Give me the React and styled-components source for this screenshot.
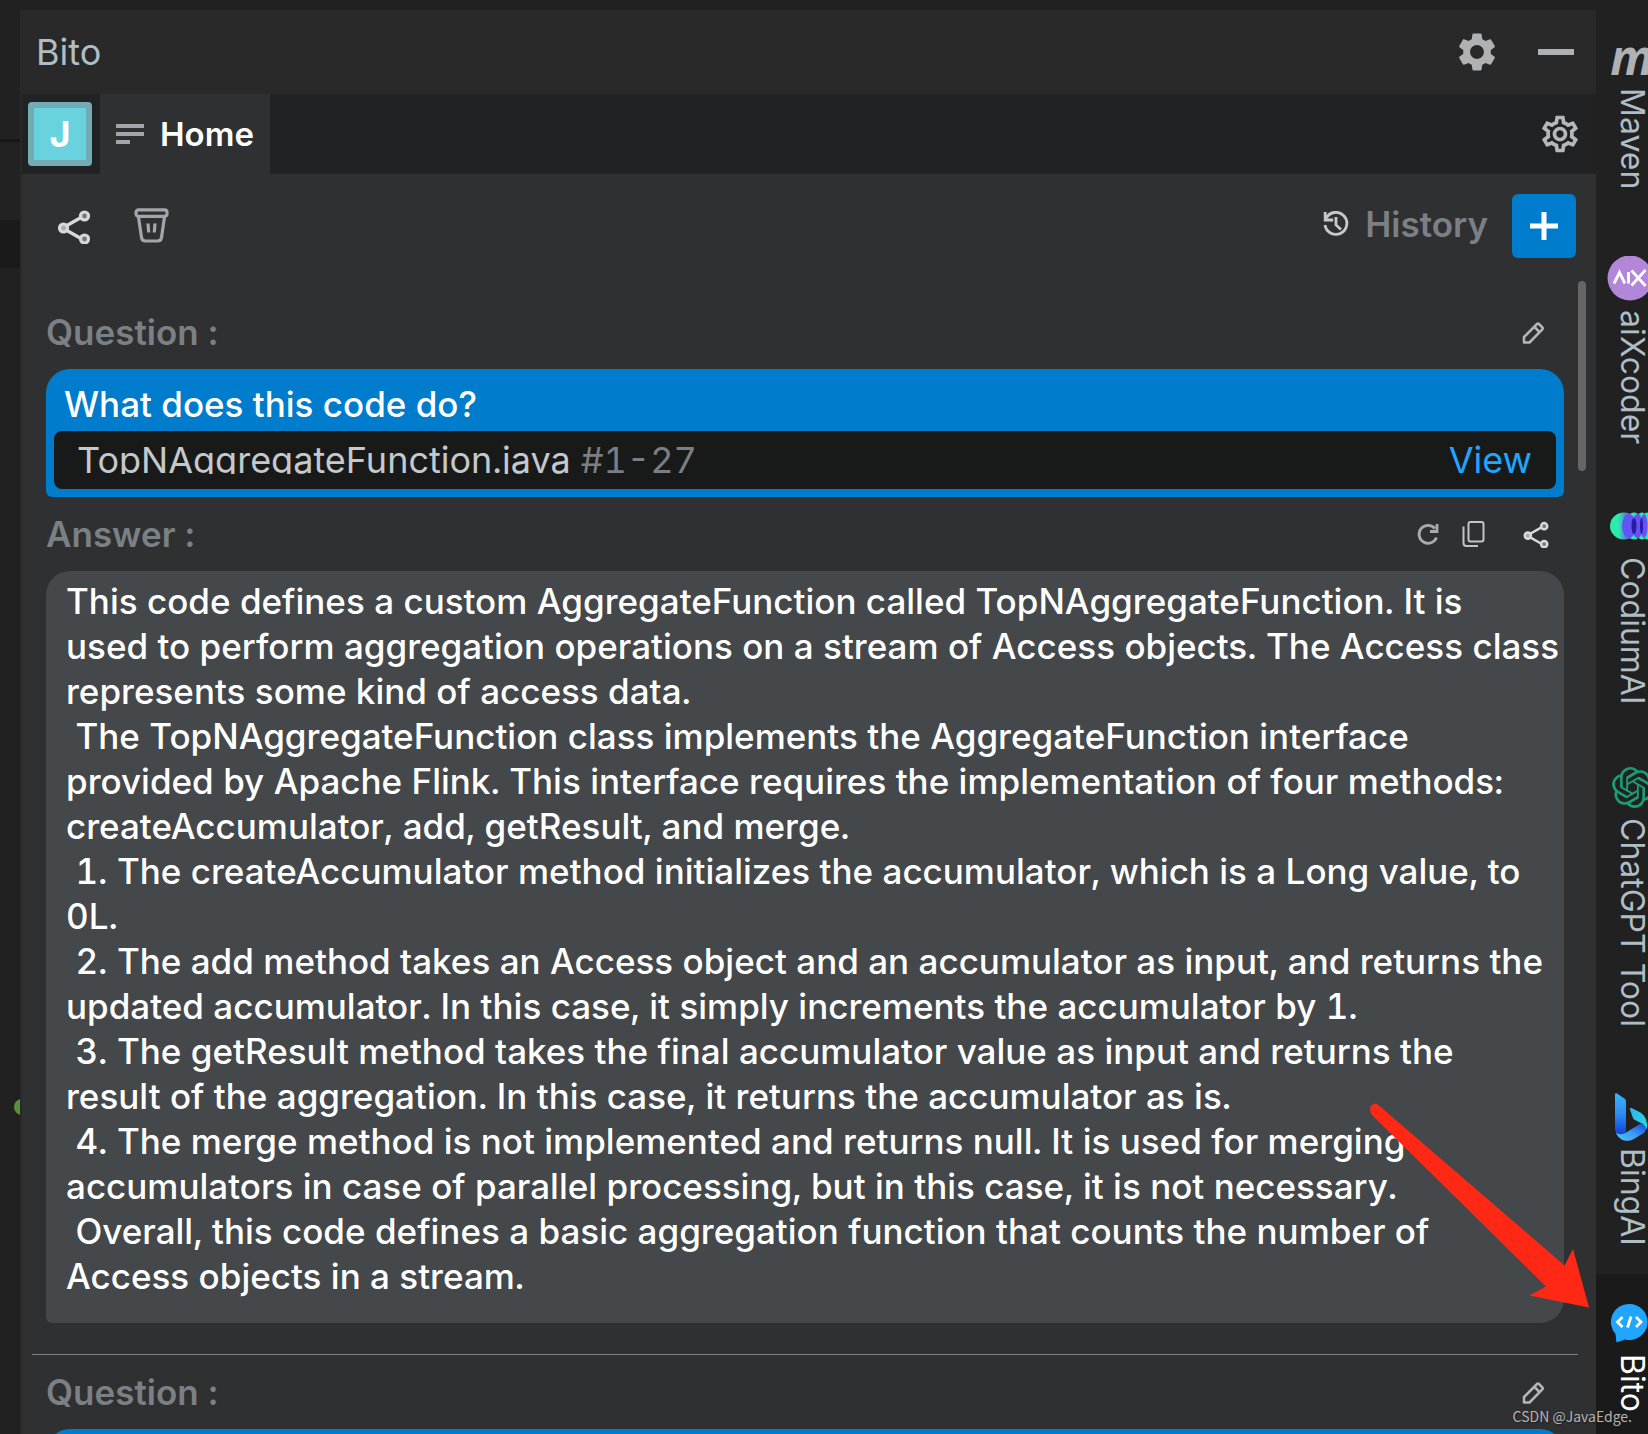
import React from "react";
import styled, { createGlobalStyle } from "styled-components";
import { MdSettings, MdOutlineSettings } from "react-icons/md";
import { SiOpenai } from "react-icons/si";

const GlobalStyle = createGlobalStyle`
  *, *::before, *::after { box-sizing: border-box; }
  body {
    margin: 0;
    background: #212121;
    font-family: Inter, "Liberation Sans", sans-serif;
  }
  button { font: inherit; color: inherit; background: none; border: 0; padding: 0; cursor: pointer; }
`;

const Window = styled.div`
  position: relative;
  display: flex;
  height: 100vh;
  overflow: hidden;
`;

/* Editor strip on the far left */
const Gutter = styled.div`
  flex: 0 0 20px;
  display: flex;
  flex-direction: column;
  overflow: hidden;
`;
const GutterBand = styled.div`
  flex: 0 0 ${(p) => p.$height}px;
  background: ${(p) => p.$color};
`;
const GutterMarks = styled.div`
  flex: 1;
  padding: 831px 0 0 14px;
`;
const ChangeDot = styled.div`
  width: 16px;
  height: 16px;
  border-radius: 50%;
  background: #57913f;
`;

/* Tool window */
const Panel = styled.main`
  flex: 1;
  min-width: 0;
  margin-top: 10px;
  display: flex;
  flex-direction: column;
  background: #2f3032;
  border-left: 2px solid #292929;
`;
const TitleBar = styled.header`
  flex: 0 0 84px;
  display: flex;
  align-items: center;
  justify-content: space-between;
  padding: 0 22px 0 14px;
  background: #292929;
  color: #afb1b3;
`;
const Title = styled.h1`
  margin: 0;
  font-size: 36px;
  font-weight: 400;
  line-height: 40px;
  color: #afbdc4;
`;
const TitleActions = styled.div`
  display: flex;
  align-items: center;
  gap: 38px;
`;
const IconButton = styled.button`
  display: flex;
  align-items: center;
  justify-content: center;
  color: ${(p) => p.$color || "#afb1b3"};
`;
const MinimizeBar = styled.span`
  width: 36px;
  height: 6px;
  background: #afb1b3;
`;

const TabBar = styled.nav`
  flex: 0 0 80px;
  display: flex;
  align-items: stretch;
  padding: 0 14px 0 6px;
  background: #212224;
`;
const Avatar = styled.button`
  align-self: center;
  width: 64px;
  height: 64px;
  margin-right: 8px;
  border: 6px solid #72abb3;
  border-radius: 4px;
  background: #68d3df;
  color: #fff;
  font-size: 36px;
  font-weight: 700;
  line-height: 40px;
`;
const Tab = styled.button`
  display: flex;
  align-items: center;
  gap: 16px;
  padding: 0 16px;
  background: #2f3032;
  color: #fff;
  font-size: 33px;
  font-weight: 600;
`;
const TabSpacer = styled.div`
  flex: 1;
`;

const Toolbar = styled.div`
  flex: 0 0 104px;
  display: flex;
  align-items: flex-start;
  justify-content: space-between;
  padding: 20px 20px 0 34px;
`;
const ToolGroup = styled.div`
  display: flex;
  align-items: center;
  height: 64px;
  gap: ${(p) => p.$gap}px;
`;
const HistoryButton = styled.button`
  display: flex;
  align-items: center;
  gap: 16px;
  padding-bottom: 4px;
  color: #7b8084;
  font-size: 35px;
  font-weight: 600;
`;
const NewChat = styled.button`
  display: flex;
  align-items: center;
  justify-content: center;
  width: 64px;
  height: 64px;
  border-radius: 6px;
  background: #007ccc;
`;

const Body = styled.div`
  flex: 1;
  min-height: 0;
  display: flex;
  overflow: hidden;
`;
const Thread = styled.div`
  flex: 1;
  min-width: 0;
  padding: 30px 0 0 10px;
`;
const Entry = styled.section`
  padding: 0 14px;
`;
const LabelRow = styled.div`
  display: flex;
  align-items: center;
  justify-content: space-between;
  height: 48px;
  margin: ${(p) => (p.$spaced ? "13px" : "0")} 0 13px;
  padding-right: 14px;
`;
const RowLabel = styled.h2`
  margin: 0;
  color: #7b8084;
  font-size: 35px;
  font-weight: 600;
  line-height: 45px;
`;
const RowActions = styled.div`
  display: flex;
  align-items: center;
  gap: 17px;
`;
const ShareSlot = styled.span`
  margin-left: 18px;
`;
const QuestionCard = styled.div`
  min-height: 128px;
  padding: 13px 8px 8px;
  border-radius: 24px 24px 6px 6px;
  background: #007ccc;
`;
const QuestionText = styled.p`
  margin: 0 10px 4px;
  color: #fff;
  font-size: 35px;
  font-weight: 500;
  line-height: 45px;
`;
const FileRow = styled.div`
  display: flex;
  align-items: flex-start;
  height: 58px;
  padding: 13px 24px 0 23px;
  border-radius: 8px;
  background: #181a19;
  font-size: 36px;
  line-height: 32px;
  font-variant-numeric: tabular-nums;
`;
const FileName = styled.span`
  height: 30px;
  overflow: hidden;
  color: #c5c9cb;
`;
const FileLines = styled.span`
  margin-left: 10px;
  color: #7b7f83;
`;
const ViewLink = styled.a`
  margin-left: auto;
  color: #21a6ff;
  text-decoration: none;
`;
const AnswerCard = styled.div`
  padding: 8px 0 24px 20px;
  border-radius: 24px 24px 24px 6px;
  background: #44484a;
  color: #fff;
  font-size: 35px;
  font-weight: 500;
  font-variant-numeric: tabular-nums;
  line-height: 45px;
  white-space: pre-wrap;
`;
const Divider = styled.hr`
  height: 1px;
  margin: 31px 0 13px;
  border: 0;
  background: #7b7f80;
`;
const ScrollTrack = styled.div`
  flex: 0 0 8px;
  margin: 3px 10px 0 0;
`;
const ScrollThumb = styled.div`
  height: 190px;
  border-radius: 4px;
  background: #666;
`;

/* Tool strip on the right */
const Rail = styled.aside`
  flex: 0 0 52px;
  overflow: hidden;
  background: #212121;
`;
const RailItem = styled.button`
  display: flex;
  flex-direction: column;
  align-items: center;
  width: 72px;
  height: ${(p) => p.$length}px;
  background: ${(p) => (p.$active ? "#1a1a1a" : "transparent")};
  color: ${(p) => (p.$active ? "#fff" : "#afbdc4")};
`;
const RailIcon = styled.span`
  flex: 0 0 ${(p) => (p.$active ? 80 : 88)}px;
  display: flex;
  align-items: center;
  justify-content: center;
  padding-top: ${(p) => (p.$active ? 18 : 26)}px;
`;
const RailLabel = styled.span`
  writing-mode: vertical-rl;
  font-size: 32px;
  line-height: 40px;
  white-space: nowrap;
`;
const MavenMark = styled.span`
  color: #afb1b3;
  font-family: "Open Sans", sans-serif;
  font-size: 48px;
  font-style: italic;
  font-weight: 700;
  line-height: 48px;
`;

/* Annotations over the window */
const ArrowOverlay = styled.svg`
  position: absolute;
  top: 1100px;
  right: 56px;
  pointer-events: none;
`;
const Watermark = styled.span`
  position: absolute;
  right: 16px;
  bottom: 8px;
  color: #b4b4b4;
  font-family: "Noto Sans CJK SC", sans-serif;
  font-size: 14px;
  line-height: 20px;
  text-shadow: 1px 1px 1px #222;
`;

const ShareIcon = ({ size = 36 }) => (
  <svg width={size} height={size} viewBox="0 0 36 36" fill="none" stroke="#d9d9d9" strokeWidth="3.200">
    <path d="M10 18 25 9.500M10 22l15 8.500" />
    <circle cx="7.500" cy="20" r="4" fill="#a9a9a9" />
    <circle cx="28.500" cy="8" r="4" fill="#777" />
    <circle cx="28.500" cy="31" r="4" fill="#777" />
  </svg>
);

const TrashIcon = () => (
  <svg width="36" height="36" viewBox="0 0 36 36" fill="none" stroke="#a3a5aa" strokeWidth="3.200" strokeLinejoin="round">
    <rect x="2" y="1.800" width="31" height="6.500" rx="2.500" />
    <path d="M4.500 9 7.500 29.500a4 4 0 0 0 4 3.500h12a4 4 0 0 0 4-3.500L30.500 9" />
    <path d="M14 15.500l.7 9M21 15.500l-.7 9" />
  </svg>
);

const HistoryIcon = () => (
  <svg width="26" height="26" viewBox="0 0 26 26" fill="none" stroke="#c5cbcb" strokeWidth="2.800">
    <path d="M3 7.500A11 11 0 1 1 2 14" />
    <path d="M2.200 1v8h8" />
    <path d="M13 6v8l5 4.500" />
  </svg>
);

const PencilIcon = () => (
  <svg width="28" height="24" viewBox="0 0 28 24" fill="none" stroke="#b3b5b7" strokeWidth="2.600" strokeLinejoin="round">
    <path d="M2 22.500V17L15 4a1.500 1.500 0 0 1 2 0l3.300 3.300a1.500 1.500 0 0 1 0 2L7.500 22.500z" />
    <path d="m12.500 7 5.300 5.300" />
  </svg>
);

const RefreshIcon = () => (
  <svg width="28" height="24" viewBox="0 0 28 24" fill="none" stroke="#a9abad" strokeWidth="2.800">
    <path d="M22.500 15.500A9 9 0 1 1 21 6.500" />
    <path d="M23 2v7.500h-7" />
  </svg>
);

const CopyIcon = () => (
  <svg width="28" height="28" viewBox="0 0 28 28" fill="none" stroke="#c0c6c6" strokeWidth="2">
    <rect x="9.500" y="2" width="15" height="19.500" rx="2" />
    <path d="M4.500 6.500V23a3 3 0 0 0 3 3H19" />
  </svg>
);

const LinesIcon = () => (
  <svg width="28" height="20" viewBox="0 0 28 20" fill="#a3a5aa">
    <path d="M0 0h28v4H0zM0 8h28v4H0zM0 16h14v4H0z" />
  </svg>
);

const PlusIcon = () => (
  <svg width="28" height="28" viewBox="0 0 28 28" stroke="#fff" strokeWidth="5">
    <path d="M14 0v28M0 14h28" />
  </svg>
);

const AixIcon = () => (
  <svg width="50" height="46" viewBox="0 0 50 46" fill="none">
    <circle cx="23" cy="22" r="22.500" fill="#b286d8" />
    <g stroke="#fff" strokeWidth="2.800">
      <path d="m7 27.500 5.500-11 5.500 11M21.500 16v11.500" />
      <path d="m24.500 14.500 14 15.500M38.500 14 24.500 29.500" />
    </g>
  </svg>
);

const CodiumIcon = () => (
  <svg width="44" height="28" viewBox="0 0 44 28">
    <defs>
      <linearGradient id="codium" x1="0" x2="1">
        <stop offset="0" stopColor="#2ceab0" />
        <stop offset=".3" stopColor="#2ceab0" />
        <stop offset=".6" stopColor="#4a7fd8" />
      </linearGradient>
    </defs>
    <ellipse cx="14" cy="14" rx="14" ry="13.500" fill="url(#codium)" />
    <ellipse cx="24" cy="14" rx="9" ry="13.500" fill="#2ceab0" />
    <ellipse cx="32" cy="14" rx="7" ry="13.500" fill="#2ceab0" />
    <ellipse cx="37" cy="14" rx="5" ry="13.500" fill="#2ceab0" />
    <ellipse cx="19" cy="14" rx="7" ry="12" fill="#6453f5" />
    <ellipse cx="27.500" cy="14" rx="5.500" ry="12" fill="#6453f5" />
    <ellipse cx="34" cy="14" rx="3.500" ry="12" fill="#6453f5" />
    <ellipse cx="24" cy="14" rx="2.500" ry="8" fill="#2b1aa5" />
    <ellipse cx="31.500" cy="14" rx="1.500" ry="8" fill="#2b1aa5" />
  </svg>
);

const BingIcon = () => (
  <svg width="36" height="48" viewBox="0 0 36 48">
    <defs>
      <linearGradient id="bingStem" x1="0" y1="0" x2="0" y2="1">
        <stop offset="0" stopColor="#38b6f5" />
        <stop offset=".5" stopColor="#2a8df5" />
        <stop offset="1" stopColor="#0f41d8" />
      </linearGradient>
      <linearGradient id="bingBase" x1="0" y1="1" x2="1" y2="0">
        <stop offset="0" stopColor="#4fc8fa" />
        <stop offset=".5" stopColor="#3c9af6" />
        <stop offset="1" stopColor="#1346dd" />
      </linearGradient>
      <linearGradient id="bingTip" x1="0" y1="0" x2="1" y2="1">
        <stop offset="0" stopColor="#36aef5" />
        <stop offset="1" stopColor="#22e0d8" />
      </linearGradient>
    </defs>
    <path d="M1 1.500C1 .3 2 0 3 .6l7 4.600c1.500 1 2 2 2 3.500V37c0 4-4 5-7 4-2.500-1-4-2.500-4-5z" fill="url(#bingStem)" />
    <path d="M2 39c2 3 7 2.500 10 .5L26 31c3-1 6.500 1 6 5-.3 2-1.500 3.500-3 4.500l-10 6C12 50 3 46 2 39z" fill="url(#bingBase)" />
    <path d="M16 16.500c-.5-1.500.5-2 2-1.300l8 4c4 2.500 7 7 7 12.800 0 2-.3 3.500-.8 4.500-.5-4-3.200-6-6.200-7l-5-2.500c-1.200-.6-1.800-1.500-2.200-2.500z" fill="url(#bingTip)" />
  </svg>
);

const BitoIcon = () => (
  <svg width="46" height="40" viewBox="0 0 46 40" fill="none">
    <path d="M20 1a18 18 0 1 1-4 35.400L7.500 39.500 6.500 31A18 18 0 0 1 20 1z" fill="#21a6ff" />
    <path d="m13.500 14-5 5 5 5M27 14l5 5-5 5M22 13.500l-3.500 11" stroke="#fff" strokeWidth="2.800" />
  </svg>
);

const ANSWER = `This code defines a custom AggregateFunction called TopNAggregateFunction. It is
used to perform aggregation operations on a stream of Access objects. The Access class
represents some kind of access data.
 The TopNAggregateFunction class implements the AggregateFunction interface
provided by Apache Flink. This interface requires the implementation of four methods:
createAccumulator, add, getResult, and merge.
 1. The createAccumulator method initializes the accumulator, which is a Long value, to
0L.
 2. The add method takes an Access object and an accumulator as input, and returns the
updated accumulator. In this case, it simply increments the accumulator by 1.
 3. The getResult method takes the final accumulator value as input and returns the
result of the aggregation. In this case, it returns the accumulator as is.
 4. The merge method is not implemented and returns null. It is used for merging
accumulators in case of parallel processing, but in this case, it is not necessary.
 Overall, this code defines a basic aggregation function that counts the number of
Access objects in a stream.`;

const TOOLS = [
  { name: "Maven", icon: <MavenMark aria-hidden="true">m</MavenMark>, length: 222 },
  { name: "aiXcoder", icon: <AixIcon />, length: 247 },
  { name: "CodiumAI", icon: <CodiumIcon />, length: 261 },
  { name: "ChatGPT Tool", icon: <SiOpenai size={41} color="#1a9c77" />, length: 330 },
  { name: "BingAI", icon: <BingIcon />, length: 214 },
  { name: "Bito", icon: <BitoIcon />, length: 160, active: true },
];

const QuestionHeader = () => (
  <LabelRow>
    <RowLabel>Question :</RowLabel>
    <IconButton aria-label="Edit question">
      <PencilIcon />
    </IconButton>
  </LabelRow>
);

export default function App() {
  return (
    <Window>
      <GlobalStyle />
      <Gutter>
        <GutterBand $height={139} $color="#212121" />
        <GutterBand $height={3} $color="#171717" />
        <GutterBand $height={78} $color="#222222" />
        <GutterBand $height={48} $color="#1a1a1a" />
        <GutterMarks>
          <ChangeDot />
        </GutterMarks>
      </Gutter>

      <Panel>
        <TitleBar>
          <Title>Bito</Title>
          <TitleActions>
            <IconButton aria-label="Options">
              <MdSettings size={46} />
            </IconButton>
            <IconButton aria-label="Hide">
              <MinimizeBar />
            </IconButton>
          </TitleActions>
        </TitleBar>

        <TabBar>
          <Avatar aria-label="Account J">J</Avatar>
          <Tab>
            <LinesIcon />
            Home
          </Tab>
          <TabSpacer />
          <IconButton aria-label="Settings" $color="#b5b7b9">
            <MdOutlineSettings size={44} />
          </IconButton>
        </TabBar>

        <Toolbar>
          <ToolGroup $gap={42}>
            <IconButton aria-label="Share conversation">
              <ShareIcon />
            </IconButton>
            <IconButton aria-label="Delete conversation">
              <TrashIcon />
            </IconButton>
          </ToolGroup>
          <ToolGroup $gap={24}>
            <HistoryButton>
              <HistoryIcon />
              History
            </HistoryButton>
            <NewChat aria-label="New chat">
              <PlusIcon />
            </NewChat>
          </ToolGroup>
        </Toolbar>

        <Body>
          <Thread>
            <Entry>
              <QuestionHeader />
              <QuestionCard>
                <QuestionText>What does this code do?</QuestionText>
                <FileRow>
                  <FileName>TopNAggregateFunction.java</FileName>
                  <FileLines>#1-27</FileLines>
                  <ViewLink href="#view">View</ViewLink>
                </FileRow>
              </QuestionCard>
              <LabelRow $spaced>
                <RowLabel>Answer :</RowLabel>
                <RowActions>
                  <IconButton aria-label="Regenerate">
                    <RefreshIcon />
                  </IconButton>
                  <IconButton aria-label="Copy answer">
                    <CopyIcon />
                  </IconButton>
                  <ShareSlot>
                    <IconButton aria-label="Share answer">
                      <ShareIcon size={28} />
                    </IconButton>
                  </ShareSlot>
                </RowActions>
              </LabelRow>
              <AnswerCard>{ANSWER}</AnswerCard>
            </Entry>
            <Divider />
            <Entry>
              <QuestionHeader />
              <QuestionCard />
            </Entry>
          </Thread>
          <ScrollTrack>
            <ScrollThumb />
          </ScrollTrack>
        </Body>
      </Panel>

      <Rail>
        {TOOLS.map((tool) => (
          <RailItem key={tool.name} $length={tool.length} $active={tool.active}>
            <RailIcon $active={tool.active}>{tool.icon}</RailIcon>
            <RailLabel>{tool.name}</RailLabel>
          </RailItem>
        ))}
      </Rail>

      <ArrowOverlay width="224" height="210" viewBox="0 0 224 210" fill="#ff2815" aria-hidden="true">
        <path d="M11 5.500 196.500 165.500 205 149 221 207.500 161.500 195.500 178 186.500 4 15C-1 8 5 0 11 5.500z" />
      </ArrowOverlay>
      <Watermark>CSDN @JavaEdge.</Watermark>
    </Window>
  );
}
